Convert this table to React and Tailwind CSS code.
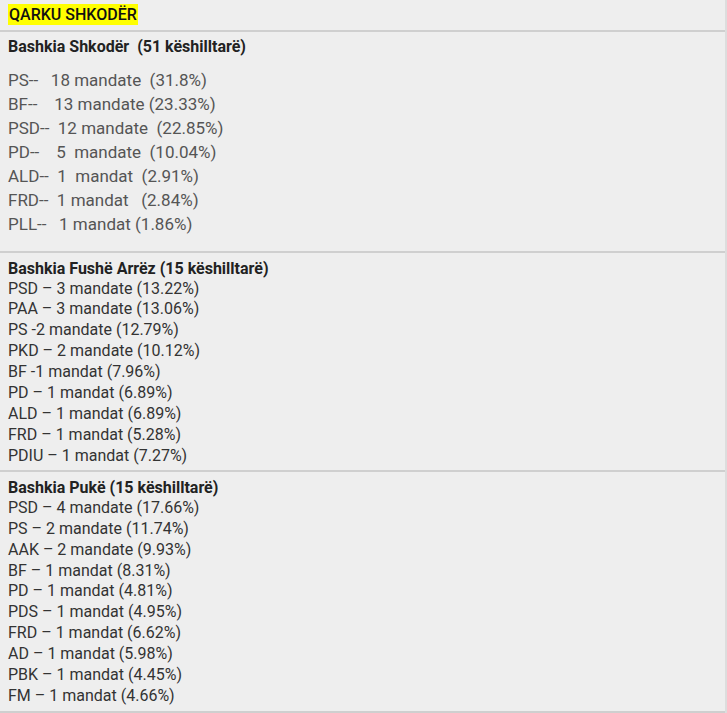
// App.jsx
const shkoder = [
  'PS--   18 mandate  (31.8%)',
  'BF--    13 mandate (23.33%)',
  'PSD--  12 mandate  (22.85%)',
  'PD--    5  mandate  (10.04%)',
  'ALD--  1  mandat  (2.91%)',
  'FRD--  1 mandat   (2.84%)',
  'PLL--   1 mandat (1.86%)',
];

const fusheArrez = [
  'PSD – 3 mandate (13.22%)',
  'PAA – 3 mandate (13.06%)',
  'PS -2 mandate (12.79%)',
  'PKD – 2 mandate (10.12%)',
  'BF -1 mandat (7.96%)',
  'PD – 1 mandat (6.89%)',
  'ALD – 1 mandat (6.89%)',
  'FRD – 1 mandat (5.28%)',
  'PDIU – 1 mandat (7.27%)',
];

const puke = [
  'PSD – 4 mandate (17.66%)',
  'PS – 2 mandate (11.74%)',
  'AAK – 2 mandate (9.93%)',
  'BF – 1 mandat (8.31%)',
  'PD – 1 mandat (4.81%)',
  'PDS – 1 mandat (4.95%)',
  'FRD – 1 mandat (6.62%)',
  'AD – 1 mandat (5.98%)',
  'PBK – 1 mandat (4.45%)',
  'FM – 1 mandat (4.66%)',
];

const Section = ({ title, rows }) => (
  <div className="border-b-2 border-[#cfcfcf] px-2 pt-[4.5px] pb-[4px]">
    <p className="font-bold text-[16px] leading-[21px] text-[#222]">{title}</p>
    {rows.map((r) => (
      <p key={r} className="text-[16px] leading-[20.875px] text-[#333] whitespace-pre">{r}</p>
    ))}
  </div>
);

export default function App() {
  return (
    <div
      className="w-[727px] h-[713px] bg-[#eeeeee] border-r-2 border-[#dddddd] overflow-hidden"
      style={{ fontFamily: 'Roboto, "Liberation Sans", sans-serif' }}
    >
      <div className="h-[32px] border-b-2 border-[#cfcfcf] px-2 pt-[3px]">
        <span className="inline-block bg-[#ffff00] text-[16px] leading-[21px] font-medium text-[#111] px-px">
          QARKU SHKODËR
        </span>
      </div>

      <div className="border-b-2 border-[#cfcfcf] px-2 pt-[4px] h-[221px]">
        <p className="font-bold text-[16px] leading-[21px] text-[#222] whitespace-pre">Bashkia Shkodër  (51 këshilltarë)</p>
        <div className="mt-[11px]">
          {shkoder.map((r) => (
            <p key={r} className="text-[17px] leading-[24px] text-[#555] whitespace-pre">{r}</p>
          ))}
        </div>
      </div>

      <Section title="Bashkia Fushë Arrëz (15 këshilltarë)" rows={fusheArrez} />
      <Section title="Bashkia Pukë (15 këshilltarë)" rows={puke} />
    </div>
  );
}
